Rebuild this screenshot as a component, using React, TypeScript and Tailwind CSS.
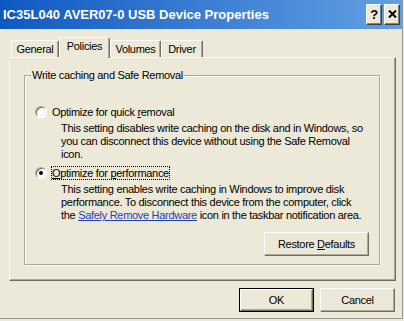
import React from "react";

const Radio = ({ checked }: { checked?: boolean }) => (
  <div className="w-[12px] h-[12px] shrink-0 rounded-full bg-white border border-[#aca899] border-r-white border-b-white shadow-[inset_1px_1px_0_#716f64,inset_-1px_-1px_0_#f1efe2] flex items-center justify-center">
    {checked && <div className="w-[4px] h-[4px] rounded-full bg-black" />}
  </div>
);

const Tab = ({ label, w, active }: { label: string; w: string; active?: boolean }) =>
  active ? (
    <div
      className={`${w} h-[21px] -mb-[1px] relative z-10 bg-[#ece9d8] border-t border-l border-white border-r border-r-[#716f64] rounded-t-[2px] shadow-[inset_-1px_0_0_#aca899] flex justify-center pt-[2px] leading-[13px]`}
    >
      {label}
    </div>
  ) : (
    <div
      className={`${w} h-[17px] border-t border-l border-white border-r border-r-[#716f64] rounded-t-[2px] shadow-[inset_-1px_0_0_#aca899] flex justify-center pt-[2px] leading-[13px]`}
    >
      {label}
    </div>
  );

const Button = ({ children, def, w }: { children: React.ReactNode; def?: boolean; w: string }) => (
  <div className={`${w} h-[24px] ${def ? "border border-black" : ""}`}>
    <div className="w-full h-full bg-[#ece9d8] border border-white border-r-[#716f64] border-b-[#716f64] shadow-[inset_-1px_-1px_0_#aca899] flex items-center justify-center leading-[13px]">
      {children}
    </div>
  </div>
);

export default function App() {
  return (
    <div className="w-[404px] h-[321px] bg-[#ece9d8] overflow-hidden font-['Liberation_Sans',Arial,sans-serif] text-[11px] tracking-[-0.3px] text-black">
      <div className="w-[403px] h-[319px] border-r border-b border-[#9a9892] flex flex-col">
        {/* title bar */}
        <div className="h-[29px] bg-gradient-to-r from-[#0c58c2] to-[#62a0e2] flex items-center justify-between pl-[3px] pr-[2px]">
          <span className="text-white font-bold text-[13px] tracking-normal">IC35L040 AVER07-0 USB Device Properties</span>
          <div className="flex gap-[2px] -mt-[1px]">
            <div className="w-[16px] h-[21px] bg-[#ece9d8] border border-white border-r-[#404040] border-b-[#404040] shadow-[inset_-1px_-1px_0_#808080] flex items-center justify-center font-bold text-[13px] leading-none">
              ?
            </div>
            <div className="w-[16px] h-[21px] bg-[#ece9d8] border border-white border-r-[#404040] border-b-[#404040] shadow-[inset_-1px_-1px_0_#808080] flex items-center justify-center">
              <svg width="9" height="8" viewBox="0 0 9 8">
                <path d="M1 0.5 L8 7.5 M8 0.5 L1 7.5" stroke="black" strokeWidth="2" />
              </svg>
            </div>
          </div>
        </div>

        {/* tabs */}
        <div className="mt-[8px] pl-[11px] h-[20px] flex items-end">
          <Tab label="General" w="w-[48px]" />
          <Tab label="Policies" w="w-[51px]" active />
          <Tab label="Volumes" w="w-[51px]" />
          <Tab label="Driver" w="w-[42px]" />
        </div>

        {/* panel */}
        <div className="ml-[9px] w-[387px] h-[224px] border border-white border-r-[#716f64] border-b-[#716f64] shadow-[inset_-1px_-1px_0_#aca899] flex flex-col">
          <div className="relative mt-[17px] ml-[14px] w-[356px] h-[190px] border border-[#aca899] shadow-[inset_1px_1px_0_white,1px_1px_0_white] flex flex-col pl-[10px] pt-[29px]">
            <span className="absolute left-[6px] -top-[7px] px-[1px] bg-[#ece9d8] leading-[13px]">
              Write caching and Safe Removal
            </span>

            <div className="flex items-center gap-[4px]">
              <Radio />
              <span className="border border-transparent leading-[12px]">
                Optimize for quick <span className="underline">r</span>emoval
              </span>
            </div>
            <div className="ml-[26px] mt-[3px] leading-[13px]">
              This setting disables write caching on the disk and in Windows, so
              <br />
              you can disconnect this device without using the Safe Removal
              <br />
              icon.
            </div>

            <div className="flex items-center gap-[4px] mt-[5px]">
              <Radio checked />
              <span className="border border-dotted border-black leading-[12px]">
                <span className="underline">O</span>ptimize for <span className="underline">p</span>erformance
              </span>
            </div>
            <div className="ml-[26px] mt-[3px] leading-[13px]">
              This setting enables write caching in Windows to improve disk
              <br />
              performance. To disconnect this device from the computer, click
              <br />
              the <span className="text-[#1f3fb8] underline">Safely Remove Hardware</span> icon in the taskbar notification area.
            </div>

            <div className="flex justify-end mr-[10px] mt-[10px]">
              <Button w="w-[105px]">
                <span>
                  Restore <span className="underline">D</span>efaults
                </span>
              </Button>
            </div>
          </div>
        </div>

        {/* dialog buttons */}
        <div className="mt-[7px] ml-[239px] flex gap-[6px]">
          <Button w="w-[75px]" def>
            OK
          </Button>
          <Button w="w-[75px]">Cancel</Button>
        </div>
      </div>
    </div>
  );
}
